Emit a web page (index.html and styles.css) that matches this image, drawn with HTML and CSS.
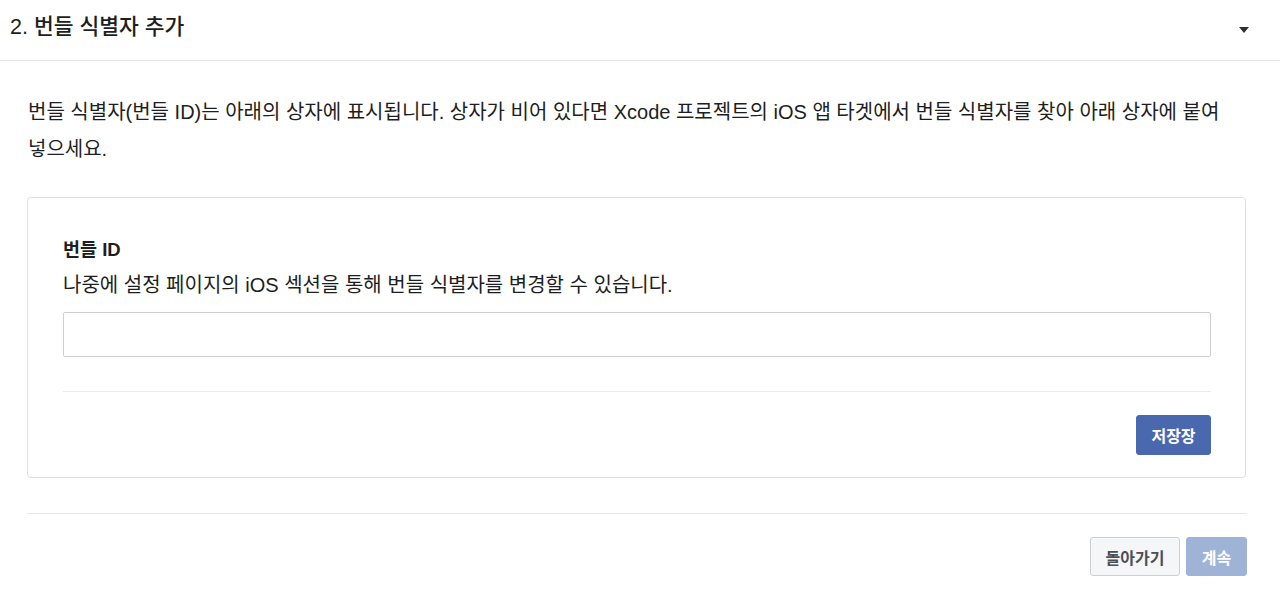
FILE: index.html
```html
<!DOCTYPE html>
<html lang="ko">
<head>
<meta charset="utf-8">
<title>번들 식별자 추가</title>
<link rel="stylesheet" href="styles.css">
</head>
<body>
<div class="section">
  <div class="section-header">
    <h2 class="section-title">2. 번들 식별자 추가</h2>
    <span class="caret" aria-hidden="true"></span>
  </div>
  <div class="section-body">
    <p class="intro">번들 식별자(번들 ID)는 아래의 상자에 표시됩니다. 상자가 비어 있다면 Xcode 프로젝트의 iOS 앱 타겟에서 번들 식별자를 찾아 아래 상자에 붙여넣으세요.</p>
    <div class="card">
      <div class="field-label">번들 ID</div>
      <div class="field-help">나중에 설정 페이지의 iOS 섹션을 통해 번들 식별자를 변경할 수 있습니다.</div>
      <input class="text-input" type="text">
      <div class="card-footer">
        <button class="btn btn-primary">저장장</button>
      </div>
    </div>
    <div class="actions">
      <button class="btn btn-secondary">돌아가기</button>
      <button class="btn btn-primary btn-disabled">계속</button>
    </div>
  </div>
</div>
</body>
</html>
```
FILE: styles.css
```css
* { box-sizing: border-box; }
html, body { margin: 0; padding: 0; background: #fff; }
body {
  font-family: "Liberation Sans", "Noto Sans CJK KR", sans-serif;
  color: #1c1e21;
}
.section-header {
  height: 61px;
  border-bottom: 1px solid #e5e6e9;
  display: flex;
  align-items: center;
  justify-content: space-between;
  padding: 0 31px 6px 10px;
}
.section-title {
  margin: 0;
  font-size: 21.5px;
  font-weight: 500;
  line-height: 26px;
}
.caret {
  width: 0; height: 0;
  border-left: 5px solid transparent;
  border-right: 5px solid transparent;
  border-top: 6px solid #2d2f33;
  margin-top: 5px;
}
.section-body {
  padding: 33px 34px 0 27px;
}
.intro {
  margin: 0 12px 29px 1px;
  font-size: 20px;
  line-height: 37px;
}
.card {
  border: 1px solid #dddfe2;
  border-radius: 4px;
  padding: 39px 34px 22px 35px;
}
.field-label {
  font-size: 18.5px;
  font-weight: 600;
  line-height: 26px;
  margin-bottom: 9px;
}
.field-help {
  font-size: 20px;
  line-height: 26px;
  margin-bottom: 14px;
}
.text-input {
  display: block;
  width: 100%;
  height: 45px;
  border: 1px solid #ccd0d5;
  border-radius: 2px;
  font: inherit;
  padding: 0 10px;
  outline: none;
}
.card-footer {
  margin-top: 34px;
  border-top: 1px solid #e9eaed;
  padding-top: 23px;
  display: flex;
  justify-content: flex-end;
}
.btn {
  font-family: inherit;
  font-size: 16px;
  font-weight: 600;
  height: 40px;
  border-radius: 3px;
  border: 1px solid transparent;
  cursor: pointer;
  padding: 0;
}
.btn-primary {
  background: #4a68ae;
  border-color: #4a68ae;
  color: #fff;
  width: 75px;
}
.btn-disabled {
  background: #9eb3d6;
  border-color: #9eb3d6;
  width: 61px;
  height: 39px;
}
.btn-secondary {
  background: #f5f6f7;
  border-color: #ccd0d5;
  color: #4b4f56;
  width: 90px;
  height: 39px;
}
.actions {
  margin-top: 35px;
  border-top: 1px solid #e5e6e9;
  padding-top: 23px;
  display: flex;
  justify-content: flex-end;
  gap: 6px;
  margin-right: -1px;
}
```
